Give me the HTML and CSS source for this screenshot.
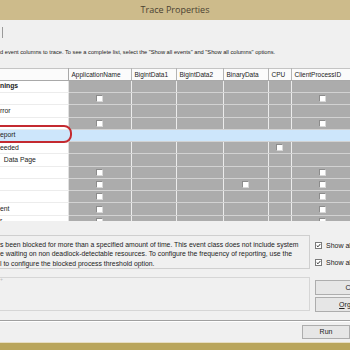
FILE: index.html
```
<!DOCTYPE html>
<html lang="en">
<head>
    <meta charset="UTF-8">
    <title>Trace Properties</title>
    <link rel="stylesheet" href="styles.css">
</head>
<body>
    <div class="window">
        <div class="titlebar">Trace Properties</div>

        <div class="tabstrip"><div class="tab"></div></div>

        <div class="intro">d event columns to trace. To see a complete list, select the "Show all events" and "Show all columns" options.</div>

        <div class="grid-wrap">
            <table class="grid">
                <colgroup>
                    <col class="c-name"><col class="c-app"><col class="c-big1"><col class="c-big2"><col class="c-bin"><col class="c-cpu"><col class="c-pid">
                </colgroup>
                <thead>
                    <tr>
                        <th class="name"></th>
                        <th>ApplicationName</th>
                        <th>BigintData1</th>
                        <th>BigintData2</th>
                        <th>BinaryData</th>
                        <th>CPU</th>
                        <th>ClientProcessID</th>
                    </tr>
                </thead>
                <tbody>
                    <tr><td class="name cat">nings</td><td></td><td></td><td></td><td></td><td></td><td></td></tr>
                    <tr><td class="name"></td><td><span class="cb"></span></td><td></td><td></td><td></td><td></td><td><span class="cb"></span></td></tr>
                    <tr><td class="name">rror</td><td></td><td></td><td></td><td></td><td></td><td></td></tr>
                    <tr><td class="name"></td><td><span class="cb"></span></td><td></td><td></td><td></td><td></td><td><span class="cb"></span></td></tr>
                    <tr class="selected"><td class="name">eport</td><td></td><td></td><td></td><td></td><td></td><td></td></tr>
                    <tr><td class="name">eeded</td><td></td><td></td><td></td><td></td><td><span class="cb"></span></td><td></td></tr>
                    <tr><td class="name">&nbsp;&nbsp;Data Page</td><td></td><td></td><td></td><td></td><td></td><td></td></tr>
                    <tr><td class="name"></td><td><span class="cb"></span></td><td></td><td></td><td></td><td></td><td><span class="cb"></span></td></tr>
                    <tr><td class="name"></td><td><span class="cb"></span></td><td></td><td></td><td><span class="cb"></span></td><td></td><td><span class="cb"></span></td></tr>
                    <tr><td class="name"></td><td><span class="cb"></span></td><td></td><td></td><td></td><td></td><td><span class="cb"></span></td></tr>
                    <tr><td class="name">ent</td><td><span class="cb"></span></td><td></td><td></td><td></td><td></td><td><span class="cb"></span></td></tr>
                    <tr><td class="name">r</td><td><span class="cb"></span></td><td></td><td></td><td></td><td></td><td><span class="cb"></span></td></tr>
                </tbody>
            </table>
            <div class="marker"></div>
        </div>

        <div class="lower">
            <div class="boxes">
                <div class="desc">s been blocked for more than a specified amount of time. This event class does not include system<br>e waiting on non deadlock-detectable resources. To configure the frequency of reporting, use the<br>l to configure the blocked process threshold option.</div>
                <div class="filters"><span class="legend">+</span></div>
            </div>
            <div class="side">
                <label class="show"><span class="check"><svg width="7" height="7" viewBox="0 0 7 7"><path d="M1 3.5 L2.8 5.3 L6 1.5" fill="none" stroke="#222" stroke-width="1.3"/></svg></span>Show all events</label>
                <label class="show"><span class="check"><svg width="7" height="7" viewBox="0 0 7 7"><path d="M1 3.5 L2.8 5.3 L6 1.5" fill="none" stroke="#222" stroke-width="1.3"/></svg></span>Show all columns</label>
                <div class="side-buttons">
                    <div class="btn wide">Column Filters...</div>
                    <div class="btn wide"><u>O</u>rganize Columns...</div>
                </div>
            </div>
        </div>

        <div class="footer">
            <div class="btn run">Run</div>
            <div class="btn cancel">Cancel</div>
        </div>

        <div class="frame-bottom"></div>
    </div>
</body>
</html>
```

FILE: styles.css
```
body {
    margin: 0;
    width: 350px;
    height: 350px;
    overflow: hidden;
    background: #f0f0f0;
    font-family: "Liberation Sans", Arial, sans-serif;
    font-size: 6.5px;
    color: #222;
}
.window {
    display: flex;
    flex-direction: column;
    height: 350px;
}
.titlebar {
    height: 20px;
    line-height: 20px;
    background: #cdbb8b;
    color: #4a4232;
    text-align: center;
    font-family: "Open Sans", sans-serif;
    font-size: 9px;
}
.tabstrip {
    height: 20px;
    display: flex;
}
.tab {
    width: 2px;
    height: 11px;
    margin-top: 7px;
    border-right: 1px solid #9a9a9a;
}
.intro {
    height: 29px;
    line-height: 10px;
    padding-top: 8px;
    box-sizing: border-box;
    white-space: nowrap;
    font-size: 5.7px;
}
.grid-wrap {
    position: relative;
    height: 153px;
    overflow: hidden;
    flex-shrink: 0;
}
.grid {
    border-collapse: collapse;
    table-layout: fixed;
    width: 353px;
}
.c-name { width: 68px; }
.c-app { width: 63px; }
.c-big1 { width: 45px; }
.c-big2 { width: 47px; }
.c-bin { width: 45px; }
.c-cpu { width: 23px; }
.c-pid { width: 62px; }
.grid th {
    height: 11px;
    padding: 0;
    background: #fbfbfb;
    border-top: 1px solid #c4c4c4;
    border-bottom: 1px solid #a9a9a9;
    border-right: 1px solid #b4b4b4;
    font-weight: normal;
    text-align: left;
    padding-left: 3px;
    white-space: nowrap;
    overflow: hidden;
}
.grid th.name {
    border-right: 1px solid #a9a9a9;
}
.grid td {
    height: 11.25px;
    padding: 0;
    background: #acacac;
    border-right: 1px solid #ececec;
    border-bottom: 1px solid #d2d2d2;
    text-align: center;
    line-height: 8px;
}
.grid td.name {
    background: #fff;
    border-right: 1px solid #e0e0e0;
    border-bottom: 1px solid #ececec;
    text-align: left;
    white-space: nowrap;
    font-size: 6.8px;
}
.grid td.cat {
    font-weight: bold;
}
.grid tr.selected td {
    background: #cde6fb;
    border-right-color: #cde6fb;
}
.cb {
    display: inline-block;
    width: 5px;
    height: 5px;
    background: #fff;
    border: 1px solid #8c8c8c;
    border-right-color: #d8d8d8;
    border-bottom-color: #d8d8d8;
    vertical-align: middle;
}
.marker {
    position: absolute;
    left: -12px;
    top: 57px;
    width: 80px;
    height: 14px;
    border: 2px solid #c42a30;
    border-radius: 0 8px 8px 0;
}
.lower {
    display: grid;
    grid-template-columns: 310px 1fr;
    column-gap: 5px;
    padding-top: 14px;
}
.boxes {
    display: flex;
    flex-direction: column;
    gap: 8px;
}
.desc {
    height: 34px;
    box-sizing: border-box;
    border: 1px solid #cfcfcf;
    border-left: none;
    padding-top: 4px;
    line-height: 9.5px;
    white-space: nowrap;
    overflow: hidden;
    font-size: 6.85px;
}
.filters {
    height: 34px;
    box-sizing: border-box;
    border: 1px solid #d6d6d6;
    border-left: none;
    position: relative;
}
.legend {
    position: absolute;
    left: 0;
    top: -2px;
    color: #bbb;
    font-size: 5px;
}
.side {
    display: flex;
    flex-direction: column;
    white-space: nowrap;
}
.show {
    display: flex;
    align-items: center;
    gap: 4px;
    height: 17px;
    font-size: 7px;
}
.show:first-child {
    margin-top: 2px;
}
.check {
    width: 7px;
    height: 7px;
    background: #fff;
    border: 1px solid #7a7a7a;
    display: flex;
    align-items: center;
    justify-content: center;
    box-sizing: border-box;
}
.check svg {
    display: block;
}
.side-buttons {
    display: flex;
    flex-direction: column;
    gap: 2px;
    margin-top: 9px;
}
.btn {
    box-sizing: border-box;
    border: 1px solid #adadad;
    background: #e6e6e6;
    text-align: center;
    white-space: nowrap;
    font-size: 7px;
}
.wide {
    width: 112px;
    height: 15px;
    line-height: 13px;
}
.footer {
    display: flex;
    justify-content: flex-end;
    gap: 5px;
    margin-top: 8px;
    padding-top: 4px;
    height: 23px;
    box-sizing: border-box;
    border-top: 1px solid #a0a0a0;
    box-shadow: inset 0 1px 0 #fff;
    margin-right: -53px;
}
.run, .cancel {
    width: 48px;
    height: 14px;
    line-height: 12px;
}
.frame-bottom {
    margin-top: auto;
    height: 7px;
    background: #b9a55c;
    border-top: 1px solid #e6ddc2;
}
```
